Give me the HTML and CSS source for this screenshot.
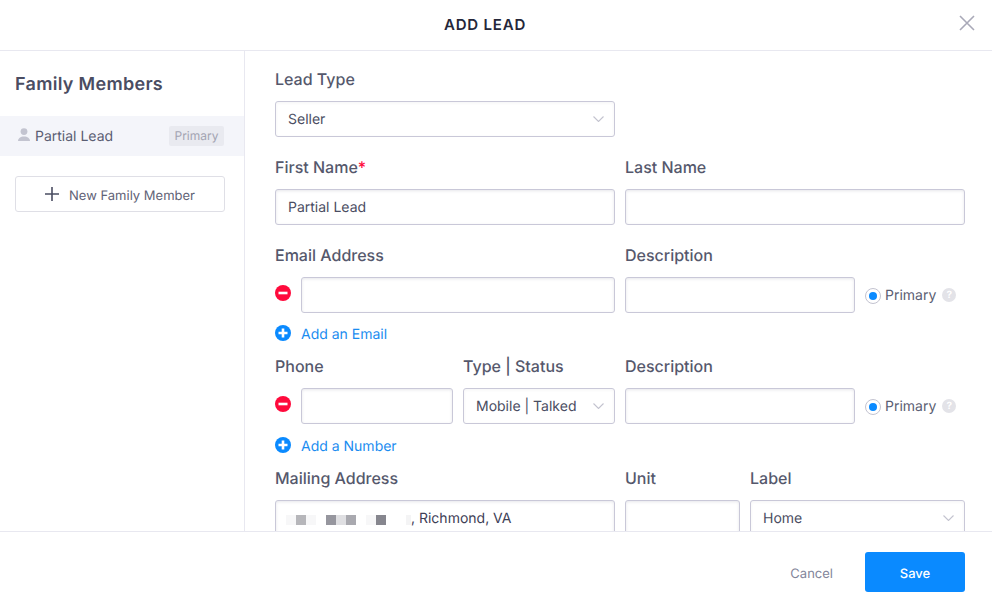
FILE: index.html
```html
<!DOCTYPE html>
<html lang="en">
<head>
<meta charset="utf-8">
<title>Add Lead</title>
<link rel="stylesheet" href="styles.css">
</head>
<body>
<div class="modal">
  <header class="modal-head">
    <h1>ADD LEAD</h1>
    <button class="close" aria-label="Close"><svg width="16" height="16" viewBox="0 0 16 16"><path d="M1 1l14 14M15 1L1 15"/></svg></button>
  </header>
  <div class="modal-body">
    <aside class="side">
      <h2>Family Members</h2>
      <div class="member">
        <svg class="person" width="12" height="13" viewBox="0 0 12 13"><circle cx="6" cy="3.6" r="3.4"/><path d="M0 13c0-2.8 2.5-4.6 6-4.6s6 1.8 6 4.6z"/></svg>
        <span class="member-name">Partial Lead</span>
        <span class="tag">Primary</span>
      </div>
      <button class="new-member"><svg width="14" height="14" viewBox="0 0 14 14"><path d="M7 0v14M0 7h14"/></svg><span class="btn-text">New Family Member</span></button>
    </aside>
    <main class="form">
      <section class="grid cols-lead">
        <label>Lead Type</label>
        <label class="spacer"></label>
        <div class="input select">Seller<svg class="chev" width="11" height="6" viewBox="0 0 11 6"><path d="M.5.5l5 5 5-5"/></svg></div>
      </section>
      <section class="grid cols-two">
        <label>First Name<span class="req">*</span></label>
        <label>Last Name</label>
        <div class="input">Partial Lead</div>
        <div class="input"></div>
      </section>
      <section class="grid cols-email">
        <label>Email Address</label>
        <label>Description</label>
        <label class="spacer"></label>
        <div class="with-icon">
          <svg class="round" width="16" height="16" viewBox="0 0 16 16"><circle class="red" cx="8" cy="8" r="8"/><path class="bar" d="M3.5 8h9"/></svg>
          <div class="input"></div>
        </div>
        <div class="input"></div>
        <div class="primary"><span class="radio"></span>Primary<span class="help">?</span></div>
      </section>
      <a class="add"><svg class="round" width="16" height="16" viewBox="0 0 16 16"><circle class="blue" cx="8" cy="8" r="8"/><path class="bar" d="M3.5 8h9M8 3.5v9"/></svg>Add an Email</a>
      <section class="grid cols-phone">
        <label>Phone</label>
        <label>Type | Status</label>
        <label>Description</label>
        <label class="spacer"></label>
        <div class="with-icon">
          <svg class="round" width="16" height="16" viewBox="0 0 16 16"><circle class="red" cx="8" cy="8" r="8"/><path class="bar" d="M3.5 8h9"/></svg>
          <div class="input"></div>
        </div>
        <div class="input select">Mobile | Talked<svg class="chev" width="11" height="6" viewBox="0 0 11 6"><path d="M.5.5l5 5 5-5"/></svg></div>
        <div class="input"></div>
        <div class="primary"><span class="radio"></span>Primary<span class="help">?</span></div>
      </section>
      <a class="add"><svg class="round" width="16" height="16" viewBox="0 0 16 16"><circle class="blue" cx="8" cy="8" r="8"/><path class="bar" d="M3.5 8h9M8 3.5v9"/></svg>Add a Number</a>
      <section class="grid cols-address">
        <label>Mailing Address</label>
        <label>Unit</label>
        <label>Label</label>
        <div class="input address">
          <span class="blur"><i class="b1"></i><i class="b2"></i><i class="b1"></i><i class="b0"></i><i class="b3"></i><i class="b4"></i><i class="b5"></i><i class="b0"></i><i class="b1"></i><i class="b6"></i><i class="b0"></i><i class="b0"></i><i class="b7"></i></span>, Richmond, VA
        </div>
        <div class="input"></div>
        <div class="input select">Home<svg class="chev" width="11" height="6" viewBox="0 0 11 6"><path d="M.5.5l5 5 5-5"/></svg></div>
      </section>
    </main>
  </div>
  <footer class="modal-foot">
    <button class="cancel">Cancel</button>
    <button class="save">Save</button>
  </footer>
</div>
</body>
</html>
```
FILE: styles.css
```css
* { box-sizing: border-box; }
html, body { margin: 0; height: 100%; overflow: hidden; background: #fff; }
body { font-family: Inter, "Noto Sans", sans-serif; color: #4a4d62; text-rendering: geometricPrecision; }
button { font-family: inherit; cursor: pointer; text-rendering: geometricPrecision; }

.modal { display: flex; flex-direction: column; height: 609px; }

.modal-head { height: 51px; flex: none; border-bottom: 1px solid #e8e8f0; display: flex; align-items: center; justify-content: center; padding-right: 22px; position: relative; }
.modal-head h1 { margin: 0; font-size: 15px; line-height: 20px; font-weight: 600; letter-spacing: .8px; color: #25273a; }
.close { position: absolute; top: 15px; right: 17px; width: 16px; height: 16px; padding: 0; border: 0; background: none; display: flex; }
.close path { stroke: #a9a9b8; stroke-width: 1.6; fill: none; }

.modal-body { flex: 1; min-height: 0; display: flex; overflow: hidden; }

.side { width: 245px; flex: none; border-right: 1px solid #e8e8f0; }
.side h2 { margin: 0; padding: 23px 15px 0; height: 65px; font-size: 18px; line-height: 22px; font-weight: 600; letter-spacing: .3px; color: #4a4d62; }
.member { height: 40px; background: #f4f5fa; display: flex; align-items: center; padding: 0 20px 0 18px; font-size: 14px; color: #5a5d72; }
.person { fill: #c3c4d0; margin-right: 5px; margin-top: -3px; }
.member-name { flex: 1; margin-top: 1px; }
.tag { background: #e9eaf0; color: #a3a4b2; font-size: 12px; line-height: 20px; min-width: 55px; text-align: center; border-radius: 2px; }
.new-member { display: flex; align-items: center; justify-content: center; margin: 20px 0 0 15px; width: 210px; height: 36px; background: #fff; border: 1px solid #dfdfe6; border-radius: 3px; color: #5f6276; font-size: 13px; padding: 0; }
.new-member svg { margin-right: 10px; }
.new-member path { stroke: #4a4d62; stroke-width: 1.6; fill: none; }
.btn-text { margin-top: 3px; }

.form { flex: 1; padding: 18px 27px 0 30px; min-width: 0; }
.grid { display: grid; column-gap: 10px; row-gap: 12px; margin-bottom: 20px; }
.cols-lead { grid-template-columns: 340px 340px; }
.cols-two { grid-template-columns: 340px 340px; }
.cols-email { grid-template-columns: 340px 230px 100px; margin-bottom: 10px; }
.cols-phone { grid-template-columns: 178px 152px 230px 100px; margin-bottom: 11px; }
.cols-address { grid-template-columns: 340px 115px 215px; }

label { font-size: 16px; line-height: 20px; font-weight: 500; color: #55586c; white-space: nowrap; }
.req { color: #ff0a3c; }

.input { height: 36px; border: 1px solid #c9c8d8; border-radius: 3px; background: #fff; box-shadow: inset 0 1px 3px rgba(60,60,90,.12); padding: 0 12px; font-size: 14px; line-height: 36px; color: #4a4d62; position: relative; min-width: 0; white-space: nowrap; overflow: hidden; }
.select { box-shadow: inset 0 1px 3px rgba(60,60,90,.06); }
.chev { position: absolute; right: 10px; top: 14px; }
.chev path { stroke: #c3c3cf; fill: none; stroke-width: 1.1; }

.with-icon { display: flex; align-items: center; gap: 10px; }
.with-icon .input { flex: 1; }
.with-icon .round { margin-bottom: 4px; }
.round { flex: none; }
.red { fill: #ff0a3c; }
.blue { fill: #0a8aff; }
.bar { stroke: #fff; stroke-width: 2.6; fill: none; }

.primary { display: flex; align-items: center; font-size: 14px; color: #5a5d72; }
.radio { width: 16px; height: 16px; border-radius: 50%; border: 1px solid #c3c3d0; background: #fff; margin: 2px 4px 0 0; position: relative; flex: none; }
.radio::after { content: ""; position: absolute; left: 3px; top: 3px; width: 8px; height: 8px; border-radius: 50%; background: #0a8aff; }
.help { width: 14px; height: 14px; border-radius: 50%; background: #e3e3e8; color: #fff; font-size: 10px; font-weight: 700; line-height: 14px; text-align: center; margin-left: 6px; flex: none; }

.add { display: flex; align-items: center; gap: 10px; height: 20px; padding-top: 2px; font-size: 14px; color: #1a8cf0; margin-bottom: 13px; }
.add .round { margin-bottom: 2px; }

.address { color: #3e4056; display: flex; align-items: center; padding-top: 2px; }
.blur { display: inline-flex; margin: 2px 0 0 -2px; height: 10px; white-space: pre; }
.blur i { display: block; width: 10px; height: 10px; }
.blur .b0 { background: #fff; }
.blur .b1 { background: #f7f7f8; }
.blur .b2 { background: #b6b6ba; }
.blur .b3 { background: #96969e; }
.blur .b4 { background: #dfdfe2; }
.blur .b5 { background: #a9a9af; }
.blur .b6 { background: #86868e; }
.blur .b7 { width: 5px; background: #f4f4f5; }

.modal-foot { height: 78px; flex: none; border-top: 1px solid #e8e8f0; background: #fff; display: flex; align-items: flex-start; justify-content: flex-end; padding: 20px 27px 0 0; position: relative; }
.cancel { border: 0; background: none; color: #82859a; font-size: 13px; padding: 4px 0 0; height: 40px; margin-right: 32px; }
.save { width: 100px; height: 40px; border: 0; border-radius: 3px; background: #0a8aff; color: #fff; font-size: 13px; font-weight: 500; padding: 4px 0 0; }
```
